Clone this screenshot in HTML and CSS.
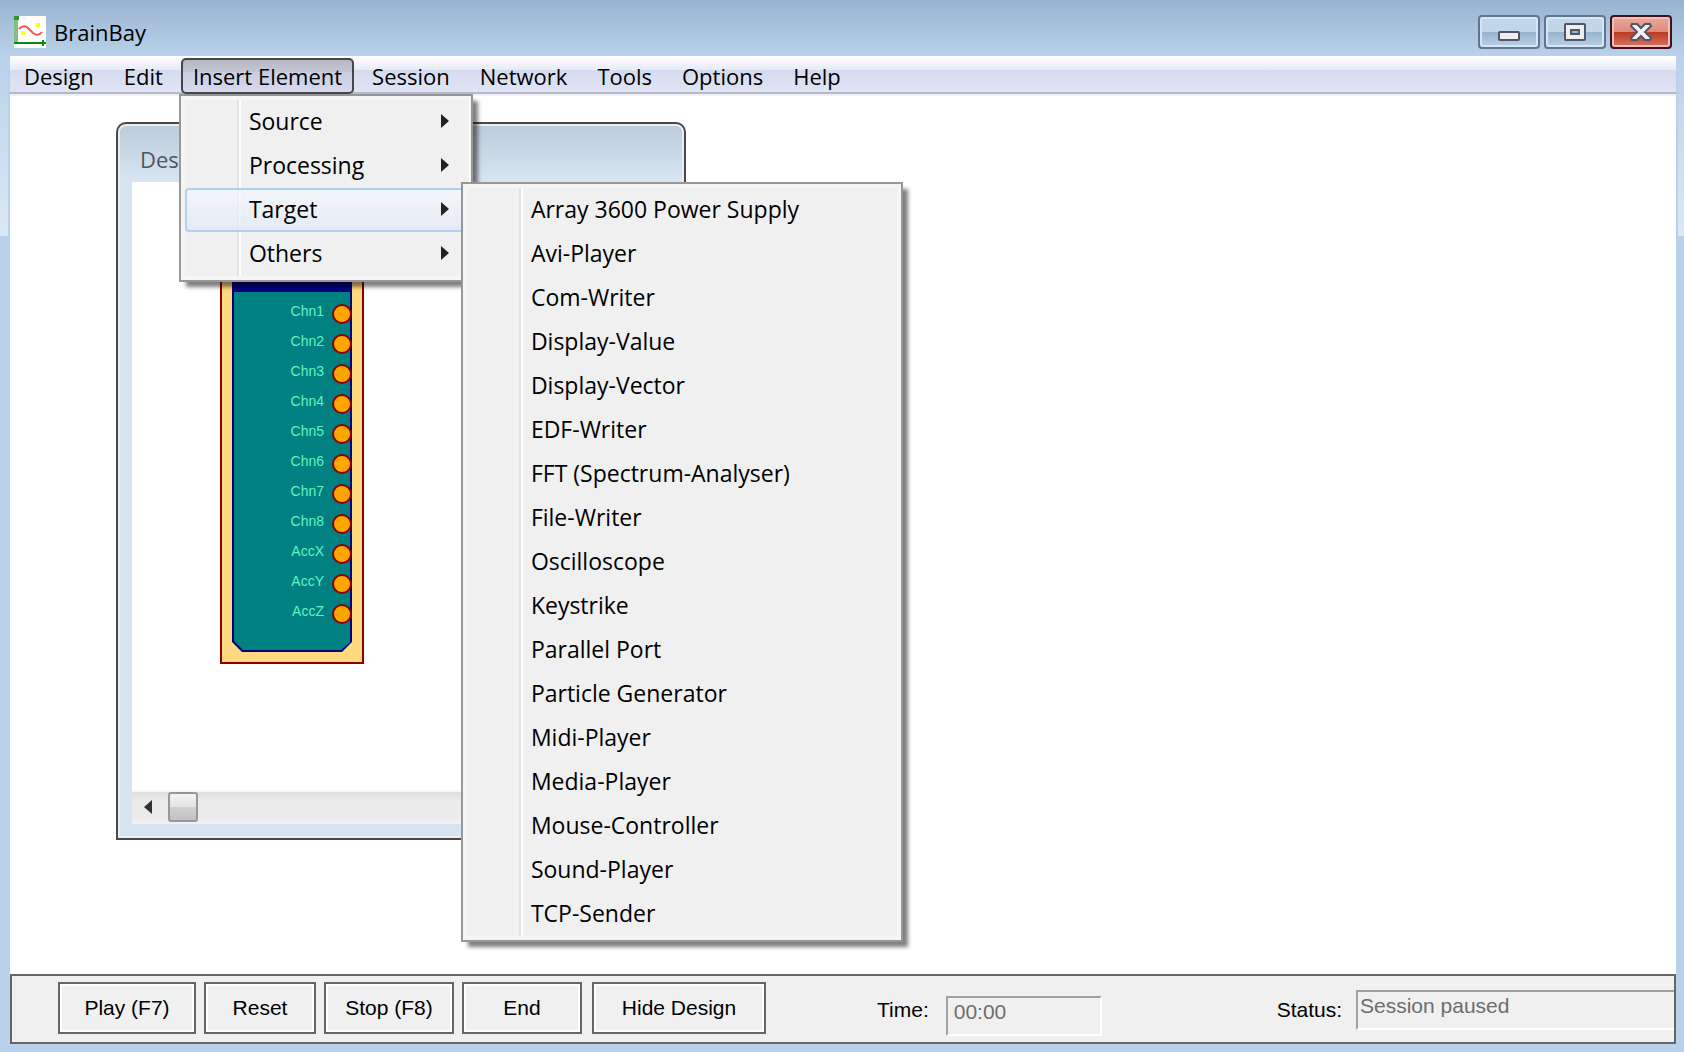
FILE: index.html
```html
<!DOCTYPE html>
<html lang="en">
<head>
<meta charset="utf-8">
<title>BrainBay</title>
<link rel="stylesheet" href="styles.css">
</head>
<body>
<div class="window">
  <header class="titlebar">
    <svg class="app-icon" viewBox="0 0 32 32" aria-hidden="true">
      <rect width="32" height="32" fill="#fff"/>
      <rect width="4" height="28" fill="#80c080"/>
      <rect width="5" height="4" fill="#2e9a2e"/>
      <rect y="26" width="31" height="2" fill="#0a8a0a"/>
      <path d="M28 24v6h2v-2h2v-2h-2v-2z" fill="#0a8a0a"/>
      <rect x="22" y="7" width="4" height="4" fill="#ffff1a"/>
      <rect x="7" y="15" width="4" height="4" fill="#ffff1a"/>
      <path d="M5 13q5-5 9-1l5 5q5 4 9-1" fill="none" stroke="#ff5050" stroke-width="2"/>
    </svg>
    <h1 class="app-title">BrainBay</h1>
    <div class="caption-buttons">
      <button class="caption" type="button" aria-label="Minimize">
        <svg viewBox="0 0 22 18"><rect x="1" y="9" width="20" height="8" rx="1" fill="#eee" stroke="#51546a" stroke-width="2"/></svg>
      </button>
      <button class="caption" type="button" aria-label="Maximize">
        <svg viewBox="0 0 22 18"><rect x="1" y="1" width="20" height="16" rx="1" fill="#eee" stroke="#51546a" stroke-width="2"/><rect x="7" y="7" width="8" height="4" fill="#8fb0d2" stroke="#51546a" stroke-width="2"/></svg>
      </button>
      <button class="caption caption-close" type="button" aria-label="Close">
        <svg viewBox="0 0 22 18"><path d="M2 1h5l4 4 4-4h5l1 2-6 6 6 6-1 2h-5l-4-4-4 4H2l-1-2 6-6-6-6z" fill="#f2f2f4" stroke="#51546a" stroke-width="2"/></svg>
      </button>
    </div>
  </header>

  <div class="frame">
    <nav class="menubar">
      <button class="menu" type="button">Design</button>
      <button class="menu" type="button">Edit</button>
      <div class="menu-anchor">
        <button class="menu menu-open" type="button">Insert Element</button>
        <div class="popup popup-main">
          <button class="item" type="button">Source</button>
          <button class="item" type="button">Processing</button>
          <button class="item item-active" type="button">Target</button>
          <button class="item" type="button">Others</button>
          <div class="popup popup-sub">
            <button class="item" type="button">Array 3600 Power Supply</button>
            <button class="item" type="button">Avi-Player</button>
            <button class="item" type="button">Com-Writer</button>
            <button class="item" type="button">Display-Value</button>
            <button class="item" type="button">Display-Vector</button>
            <button class="item" type="button">EDF-Writer</button>
            <button class="item" type="button">FFT (Spectrum-Analyser)</button>
            <button class="item" type="button">File-Writer</button>
            <button class="item" type="button">Oscilloscope</button>
            <button class="item" type="button">Keystrike</button>
            <button class="item" type="button">Parallel Port</button>
            <button class="item" type="button">Particle Generator</button>
            <button class="item" type="button">Midi-Player</button>
            <button class="item" type="button">Media-Player</button>
            <button class="item" type="button">Mouse-Controller</button>
            <button class="item" type="button">Sound-Player</button>
            <button class="item" type="button">TCP-Sender</button>
          </div>
        </div>
      </div>
      <button class="menu" type="button">Session</button>
      <button class="menu" type="button">Network</button>
      <button class="menu" type="button">Tools</button>
      <button class="menu" type="button">Options</button>
      <button class="menu" type="button">Help</button>
    </nav>

    <main class="workspace">
      <section class="design">
        <h2 class="design-title">Design</h2>
        <div class="canvas">
          <div class="node">
            <div class="node-body">
              <ul class="ports">
                <li>Chn1<i></i></li>
                <li>Chn2<i></i></li>
                <li>Chn3<i></i></li>
                <li>Chn4<i></i></li>
                <li>Chn5<i></i></li>
                <li>Chn6<i></i></li>
                <li>Chn7<i></i></li>
                <li>Chn8<i></i></li>
                <li>AccX<i></i></li>
                <li>AccY<i></i></li>
                <li>AccZ<i></i></li>
              </ul>
            </div>
          </div>
        </div>
        <div class="scrollbar">
          <svg class="scroll-arrow" viewBox="0 0 8 14" aria-hidden="true"><path d="M8 0v14L0 7z" fill="#333"/></svg>
          <div class="thumb"></div>
        </div>
      </section>
    </main>

    <footer class="controls">
      <button class="push play" type="button">Play (F7)</button>
      <button class="push reset" type="button">Reset</button>
      <button class="push stop" type="button">Stop (F8)</button>
      <button class="push end" type="button">End</button>
      <button class="push hide" type="button">Hide Design</button>
      <label class="label" for="time">Time:</label>
      <input class="field time" id="time" value="00:00" readonly>
      <label class="label label-status" for="status">Status:</label>
      <input class="field status" id="status" value="Session paused" readonly>
    </footer>
  </div>
</div>
</body>
</html>
```
FILE: styles.css
```css
* {
  box-sizing: border-box;
}

body {
  margin: 0;
  font-family: "Open Sans", "Noto Sans", sans-serif;
  font-size: 22px;
  color: #000;
}

button {
  font: inherit;
  color: inherit;
}

.window {
  display: flex;
  flex-direction: column;
  min-height: 100vh;
  background: #b9d1ea;
}

/* Title bar */
.titlebar {
  display: flex;
  align-items: center;
  height: 56px;
  padding: 8px 12px 0 14px;
  background: linear-gradient(#99b4d1, #b9d1ea);
}

.app-icon {
  width: 32px;
  height: 32px;
}

.app-title {
  flex: 1;
  margin: 0 0 0 8px;
  font-size: 22px;
  font-weight: 400;
}

.caption-buttons {
  display: flex;
  gap: 4px;
}

.caption {
  display: flex;
  align-items: center;
  justify-content: center;
  width: 62px;
  height: 34px;
  padding: 0;
  border: 2px solid #5f7590;
  border-radius: 4px;
  background: linear-gradient(#c2d6e9 0 50%, #98b3cf 50%, #b9d1e8);
  box-shadow: inset 0 0 0 2px #d7e6f4;
}

.caption svg {
  width: 22px;
  height: 18px;
}

.caption-close {
  border-color: #43101c;
  background: linear-gradient(#eaa89c, #dd8a7b 50%, #b83a22 50%, #d87562);
  box-shadow: inset 0 0 0 2px #efc0b8;
}

/* Window frame */
.frame {
  flex: 1;
  display: flex;
  flex-direction: column;
  padding: 0 8px 8px 10px;
  background:
    linear-gradient(#b9d1ea, #dbe8f5) no-repeat 0 0 / 8px 180px,
    linear-gradient(#b9d1ea, #dbe8f5) no-repeat 100% 0 / 6px 180px;
}

/* Menu bar */
.menubar {
  position: relative;
  z-index: 1;
  display: flex;
  gap: 6px;
  height: 38px;
  padding: 2px 2px 0;
  border-bottom: 2px solid #b3b8cf;
  background: linear-gradient(#fff, #e7ebf6 14px, #d5dbee 14px, #e0e5f5);
}

.menu {
  height: 36px;
  padding: 0 12px;
  border: 0;
  background: none;
  line-height: 32px;
  white-space: nowrap;
}

.menu-anchor {
  position: relative;
}

.menu-open {
  border: 2px solid #46474d;
  border-radius: 5px;
  padding: 0 10px;
  background: linear-gradient(#b5b7c0, #c5c8d4 12px, #c9cde0 12px, #d5daec);
  line-height: 28px;
}

/* Popup menus */
.popup {
  position: absolute;
  padding: 4px;
  border: 2px solid #979797;
  background:
    linear-gradient(90deg, #e0e0e0 2px, #fff 2px) no-repeat 56px 4px / 4px calc(100% - 8px),
    #f0f0f0;
  box-shadow: inset 0 0 0 4px #f5f5f5, 6px 6px 4px -1px rgba(0, 0, 0, 0.5);
  font-size: 23px;
}

.popup-main {
  top: 36px;
  left: -2px;
  width: 294px;
}

.popup-sub {
  top: 86px;
  left: 280px;
  width: 442px;
}

.item {
  position: relative;
  display: block;
  width: 100%;
  height: 44px;
  padding: 0 0 2px 64px;
  border: 0;
  background: none;
  line-height: 42px;
  text-align: left;
  white-space: nowrap;
}

.popup-main > .item::after {
  content: "";
  position: absolute;
  top: 14px;
  right: 18px;
  border: solid transparent;
  border-width: 7px 0 7px 8px;
  border-left-color: #222;
}

.item-active {
  border-radius: 4px;
  background: linear-gradient(rgba(245, 247, 250, 0.8), rgba(225, 233, 246, 0.8));
  box-shadow: inset 0 0 0 2px #aecff7;
}

/* Workspace */
.workspace {
  flex: 1;
  padding: 26px 0 0 106px;
  border-top: 2px solid #f0f0f0;
  background: #fff;
}

.design {
  display: flex;
  flex-direction: column;
  width: 570px;
  height: 718px;
  padding: 2px 12px 14px 14px;
  border: 2px solid #494949;
  border-radius: 10px 10px 0 0;
  background: linear-gradient(#bccbda, #d7e4f2 56px);
  box-shadow: inset 0 0 0 2px #e9edf5;
}

.design-title {
  height: 56px;
  margin: 0;
  padding-left: 8px;
  font-size: 22px;
  font-weight: 400;
  line-height: 66px;
  color: #4c5560;
}

.canvas {
  flex: 1;
  padding: 40px 0 0 88px;
  background: #fff;
}

.node {
  width: 144px;
  height: 442px;
  padding: 10px;
  border: 2px solid #8b0000;
  background: #ffd97f;
}

.node-body {
  height: 418px;
  padding: 2px;
  background: #000080;
  clip-path: polygon(0 0, 100% 0, 100% 408px, 110px 100%, 10px 100%, 0 408px);
}

.ports {
  height: 358px;
  margin: 56px 0 0;
  padding: 7px 0 0;
  list-style: none;
  background: #008080;
  font-family: "Liberation Sans", Arial, sans-serif;
  font-size: 14px;
  color: #5ff5c0;
  clip-path: polygon(0 0, 118px 0, 118px 349px, 107px 100%, 9px 100%, 0 349px);
}

.ports li {
  display: flex;
  align-items: flex-start;
  justify-content: flex-end;
  gap: 8px;
  height: 30px;
  padding-top: 5px;
  line-height: 14px;
}

.ports i {
  width: 20px;
  height: 20px;
  margin-right: -2px;
  border: 2px solid #8b0000;
  border-radius: 50%;
  background: #ffa500;
}

.scrollbar {
  display: flex;
  align-items: center;
  gap: 16px;
  height: 34px;
  padding-left: 12px;
  background: linear-gradient(#f7f7f7 2px, #dedede 2px, #ebebeb 10px, #ebebeb 28px, #f2f2f2);
}

.scroll-arrow {
  width: 8px;
  height: 14px;
}

.thumb {
  width: 30px;
  height: 30px;
  border: 2px solid #989898;
  border-radius: 3px;
  background: linear-gradient(#f4f4f4, #e3e3e5 50%, #d0d0d3 50%, #c2c2c6);
}

/* Control panel */
.controls {
  display: flex;
  align-items: flex-start;
  height: 70px;
  padding: 6px 0 0 46px;
  border: 2px solid #666;
  background: #f0f0f0;
  font-family: "Liberation Sans", Arial, sans-serif;
  font-size: 21px;
}

.push {
  height: 52px;
  margin-right: 8px;
  padding: 0;
  border: 2px solid #666;
  background: #f0f0f0;
  box-shadow: inset 0 0 0 2px #fff;
  white-space: nowrap;
}

.play {
  width: 138px;
}

.reset {
  width: 112px;
}

.stop {
  width: 130px;
}

.end {
  width: 120px;
  margin-right: 10px;
}

.hide {
  width: 174px;
}

.label {
  margin-left: 103px;
  line-height: 56px;
}

.field {
  height: 40px;
  border: 2px solid;
  border-color: #a0a0a0 #fff #fff #a0a0a0;
  background: #f0f0f0;
  color: #6d6d6d;
  font: inherit;
  outline: 0;
}

.time {
  width: 156px;
  margin: 14px 0 0 17px;
  padding: 0 6px 8px;
}

.label-status {
  margin-left: auto;
}

.status {
  width: 318px;
  margin: 8px 0 0 14px;
  padding: 0 2px 8px;
  border-right: 0;
}
```
